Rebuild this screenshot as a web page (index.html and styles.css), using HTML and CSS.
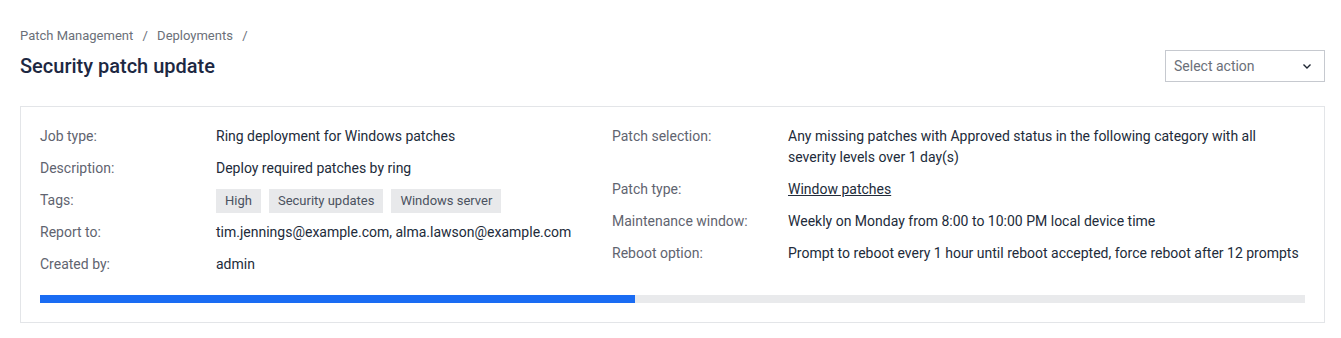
FILE: index.html
```html
<!DOCTYPE html>
<html lang="en">
<head>
  <meta charset="UTF-8">
  <meta name="viewport" content="width=device-width, initial-scale=1.0">
  <title>Security patch update</title>
  <link rel="stylesheet" href="styles.css">
</head>
<body>
  <div class="page">
    <div class="page-header">
      <div class="heading">
        <div class="breadcrumb">
          <a href="#">Patch Management</a>
          <span class="sep">/</span>
          <a href="#">Deployments</a>
          <span class="sep">/</span>
        </div>
        <h1>Security patch update</h1>
      </div>
      <div class="select">
        <span>Select action</span>
        <svg width="12" height="12" viewBox="0 0 12 12"><path d="M2.5 4.5 L6 8 L9.5 4.5" fill="none" stroke="#1f2733" stroke-width="1.4"/></svg>
      </div>
    </div>

    <div class="card">
      <div class="details">
        <div class="col">
          <div class="row"><div class="label">Job type:</div><div class="value">Ring deployment for Windows patches</div></div>
          <div class="row"><div class="label">Description:</div><div class="value">Deploy required patches by ring</div></div>
          <div class="row"><div class="label">Tags:</div>
            <div class="value tags">
              <span class="tag">High</span>
              <span class="tag">Security updates</span>
              <span class="tag">Windows server</span>
            </div>
          </div>
          <div class="row"><div class="label">Report to:</div><div class="value">tim.jennings@example.com, alma.lawson@example.com</div></div>
          <div class="row"><div class="label">Created by:</div><div class="value">admin</div></div>
        </div>
        <div class="col">
          <div class="row"><div class="label">Patch selection:</div><div class="value">Any missing patches with Approved status in the following category with all severity levels over 1 day(s)</div></div>
          <div class="row"><div class="label">Patch type:</div><div class="value"><a href="#">Window patches</a></div></div>
          <div class="row"><div class="label">Maintenance window:</div><div class="value">Weekly on Monday from 8:00 to 10:00 PM local device time</div></div>
          <div class="row"><div class="label">Reboot option:</div><div class="value">Prompt to reboot every 1 hour until reboot accepted, force reboot after 12 prompts</div></div>
        </div>
      </div>
      <div class="progress"><div class="progress-fill" style="width: 47%"></div></div>
    </div>
  </div>
</body>
</html>
```

FILE: styles.css
```css
body {
  margin: 0;
  font-family: Roboto, "Liberation Sans", Arial, sans-serif;
  background: #fff;
  color: #222b3a;
}

.page {
  padding: 27px 16px 0 20px;
}

.page-header {
  display: flex;
  justify-content: space-between;
  align-items: flex-end;
}

.breadcrumb {
  font-size: 13px;
  line-height: 18px;
  color: #6b7079;
  margin-bottom: 5px;
}

.breadcrumb a {
  color: #6b7079;
  text-decoration: none;
}

.breadcrumb .sep {
  margin: 0 6px;
}

h1 {
  margin: 0;
  font-size: 20px;
  font-weight: 500;
  line-height: 32px;
  color: #1d2842;
}

.select {
  width: 160px;
  height: 32px;
  box-sizing: border-box;
  border: 1px solid #c6c9cf;
  display: flex;
  align-items: center;
  justify-content: space-between;
  padding: 0 11px 0 8px;
  font-size: 14px;
  color: #6b7079;
}

.card {
  margin-top: 24px;
  border: 1px solid #e3e5e8;
  padding: 19px;
}

.details {
  display: grid;
  grid-template-columns: 572px 1fr;
}

.col {
  display: flex;
  flex-direction: column;
  gap: 11px;
}

.row {
  display: flex;
  font-size: 14px;
  line-height: 21px;
}

.label {
  width: 176px;
  flex-shrink: 0;
  color: #5f6470;
}

.value {
  flex: 1;
  color: #222b3a;
}

.value a {
  color: #222b3a;
}

.tags {
  display: flex;
  align-items: center;
  gap: 8px;
  height: 21px;
}

.tag {
  background: #e8e9eb;
  color: #4b5260;
  font-size: 13px;
  padding: 0 9px;
  height: 24px;
  line-height: 24px;
}

.progress {
  margin-top: 20px;
  height: 8px;
  background: #e9eaec;
}

.progress-fill {
  height: 100%;
  background: #1a6cf3;
}
```
